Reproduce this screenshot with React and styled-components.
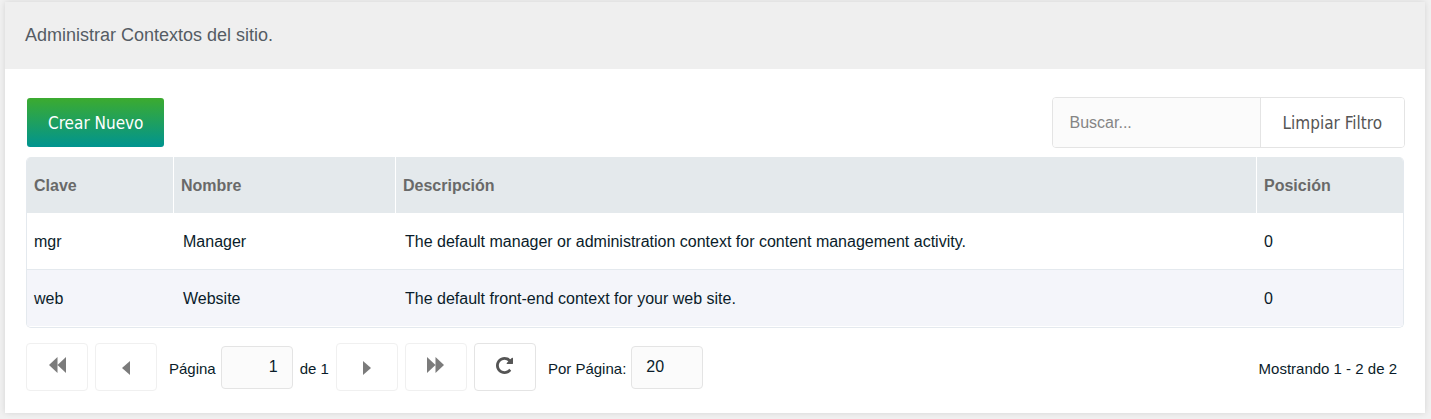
import React, { useState } from "react";
import styled, { createGlobalStyle } from "styled-components";

const GlobalStyle = createGlobalStyle`
  * { box-sizing: border-box; }
  body {
    margin: 0;
    background: #f1f1f1;
    color: #0a1c2a;
    font: 16px/20px "Liberation Sans", Arial, sans-serif;
  }
  button, input { font: inherit; }
`;

const Panel = styled.main`
  margin: 2px 6px 6px 5px;
  background: #fff;
  box-shadow: 0 0 6px rgba(0, 0, 0, 0.12);
`;

const PanelHeader = styled.header`
  padding: 22px 20px 23px;
  background: #efefef;
  color: #555c64;
  font-size: 18px;
  line-height: 22px;
`;

const PanelBody = styled.div`
  padding: 28px 20px 22px 21px;
`;

const Toolbar = styled.div`
  display: flex;
  justify-content: space-between;
  align-items: center;
  margin-bottom: 9px;
`;

const PrimaryButton = styled.button`
  height: 49px;
  margin-left: 1px;
  padding: 0 21px;
  border: 0;
  border-radius: 3px;
  background: linear-gradient(#3cab2f, #009490);
  color: #fff;
  font-family: "DejaVu Sans Condensed", Tahoma, sans-serif;
  font-size: 17px;
`;

const SearchGroup = styled.form`
  display: flex;
  height: 51px;
  border: 1px solid #e4e4e4;
  border-radius: 4px;
  overflow: hidden;
`;

const SearchInput = styled.input`
  width: 208px;
  padding: 0 17px;
  border: 0;
  border-right: 1px solid #e4e4e4;
  background: #fbfbfb;
  color: #0a1c2a;
  &::placeholder { color: #858585; opacity: 1; }
`;

const ClearButton = styled.button`
  padding: 0 22px;
  border: 0;
  background: #fff;
  color: #555;
  font-family: "DejaVu Sans Condensed", Tahoma, sans-serif;
  font-size: 17px;
`;

const TableFrame = styled.div`
  margin-right: 1px;
  padding-bottom: 1px;
  border: 1px solid #e4e9ee;
  border-top: 0;
  border-radius: 5px;
  overflow: hidden;
`;

const Table = styled.table`
  width: 100%;
  border-collapse: separate;
  border-spacing: 0;
  table-layout: fixed;
`;

const HeadCell = styled.th`
  width: ${({ $width }) => $width || "auto"};
  height: 56px;
  padding: 2px 7px 0;
  background: #e4e9ec;
  color: #696969;
  text-align: left;
  & + & { border-left: 1px solid #fff; }
`;

const Cell = styled.td`
  height: 57px;
  padding: 2px 8px 0 10px;
  &:first-child { padding-left: 7px; }
  &:last-child { padding-left: 8px; }
`;

const Row = styled.tr`
  &:nth-child(even) ${Cell} {
    background: #f4f5fa;
  }
  & + & ${Cell} { border-top: 1px solid #e4e9ee; }
  &:first-child ${Cell} { height: 56px; }
`;

const Pager = styled.nav`
  display: flex;
  align-items: center;
  gap: 7px;
  margin-top: 15px;
  font-size: 15px;
`;

const PagerButton = styled.button`
  display: flex;
  align-items: center;
  justify-content: center;
  width: 62px;
  height: 48px;
  padding: ${({ $raised }) => ($raised ? "0 0 4px" : "2px 0 0")};
  border: 1px solid ${({ disabled }) => (disabled ? "#f0f0f0" : "#e4e4e4")};
  border-radius: 4px;
  background: #fff;
  color: ${({ disabled }) => (disabled ? "#7b7b7b" : "#555")};
`;

const PagerLabel = styled.label`
  display: flex;
  align-items: center;
  gap: 5px;
  margin-left: 5px;
`;

const PagerText = styled.span`
  padding-top: 3px;
`;

const PagerInput = styled.input`
  width: 72px;
  height: 43px;
  padding: 0 14px;
  border: 1px solid #e4e4e4;
  border-radius: 4px;
  background: #fbfbfb;
  color: #0a1c2a;
  font-size: 16px;
  text-align: ${({ $align }) => $align || "left"};
`;

const Summary = styled(PagerText)`
  margin-left: auto;
  padding-right: 8px;
`;

const contexts = [
  { key: "mgr", name: "Manager", description: "The default manager or administration context for content management activity.", rank: 0 },
  { key: "web", name: "Website", description: "The default front-end context for your web site.", rank: 0 },
];

const Arrow = ({ double, flip }) => (
  <svg
    width={double ? 17 : 8}
    height={double ? 16 : 14}
    viewBox={double ? "0 0 17 16" : "0 0 8 14"}
    fill="currentColor"
    aria-hidden="true"
  >
    <g transform={flip ? `translate(${double ? 17 : 8} 0) scale(-1 1)` : undefined}>
      <path d={double ? "M0 8L8.5 0V8L17 0V16L8.5 8V16Z" : "M0 7L8 0V14Z"} />
    </g>
  </svg>
);

const RefreshIcon = () => (
  <svg width="17" height="17" viewBox="0 0 1536 1536" fill="currentColor" aria-hidden="true">
    <path d="M1536 128v448q0 26-19 45t-45 19h-448q-42 0-59-40-17-39 14-69l138-138q-148-137-349-137-104 0-198.500 40.500t-163.500 109.500-109.500 163.500-40.500 198.500 40.500 198.500 109.500 163.500 163.500 109.500 198.500 40.500q119 0 225-52t179-147q7-10 23-12 15 0 25 9l137 138q9 8 9.500 20.500t-7.500 22.500q-109 132-264 204.500t-327 72.500q-156 0-298-61t-245-164-164-245-61-298 61-298 164-245 245-164 298-61q147 0 284.500 55.500t244.500 156.500l130-129q29-31 70-14 39 17 39 59z" />
  </svg>
);

export default function App() {
  const [query, setQuery] = useState("");
  const rows = contexts.filter((c) => (c.key + c.name + c.description).toLowerCase().includes(query.toLowerCase()));
  return (
    <>
      <GlobalStyle />
      <Panel>
        <PanelHeader>Administrar Contextos del sitio.</PanelHeader>
        <PanelBody>
          <Toolbar>
            <PrimaryButton type="button">Crear Nuevo</PrimaryButton>
            <SearchGroup onSubmit={(e) => e.preventDefault()}>
              <SearchInput
                aria-label="Buscar"
                placeholder="Buscar..."
                value={query}
                onChange={(e) => setQuery(e.target.value)}
              />
              <ClearButton type="button" onClick={() => setQuery("")}>Limpiar Filtro</ClearButton>
            </SearchGroup>
          </Toolbar>
          <TableFrame>
            <Table>
              <thead>
                <tr>
                  <HeadCell $width="146px">Clave</HeadCell>
                  <HeadCell $width="222px">Nombre</HeadCell>
                  <HeadCell>Descripción</HeadCell>
                  <HeadCell $width="147px">Posición</HeadCell>
                </tr>
              </thead>
              <tbody>
                {rows.map((c) => (
                  <Row key={c.key}>
                    <Cell>{c.key}</Cell>
                    <Cell>{c.name}</Cell>
                    <Cell>{c.description}</Cell>
                    <Cell>{c.rank}</Cell>
                  </Row>
                ))}
              </tbody>
            </Table>
          </TableFrame>
          <Pager aria-label="Paginación">
            <PagerButton type="button" disabled $raised aria-label="Primera página"><Arrow double /></PagerButton>
            <PagerButton type="button" disabled aria-label="Página anterior"><Arrow /></PagerButton>
            <PagerLabel>
              <PagerText>Página</PagerText>
              <PagerInput defaultValue="1" $align="right" />
            </PagerLabel>
            <PagerText>de 1</PagerText>
            <PagerButton type="button" disabled aria-label="Página siguiente"><Arrow flip /></PagerButton>
            <PagerButton type="button" disabled $raised aria-label="Última página"><Arrow double flip /></PagerButton>
            <PagerButton type="button" $raised aria-label="Actualizar"><RefreshIcon /></PagerButton>
            <PagerLabel>
              <PagerText>Por Página:</PagerText>
              <PagerInput defaultValue="20" />
            </PagerLabel>
            <Summary>Mostrando 1 - 2 de 2</Summary>
          </Pager>
        </PanelBody>
      </Panel>
    </>
  );
}
